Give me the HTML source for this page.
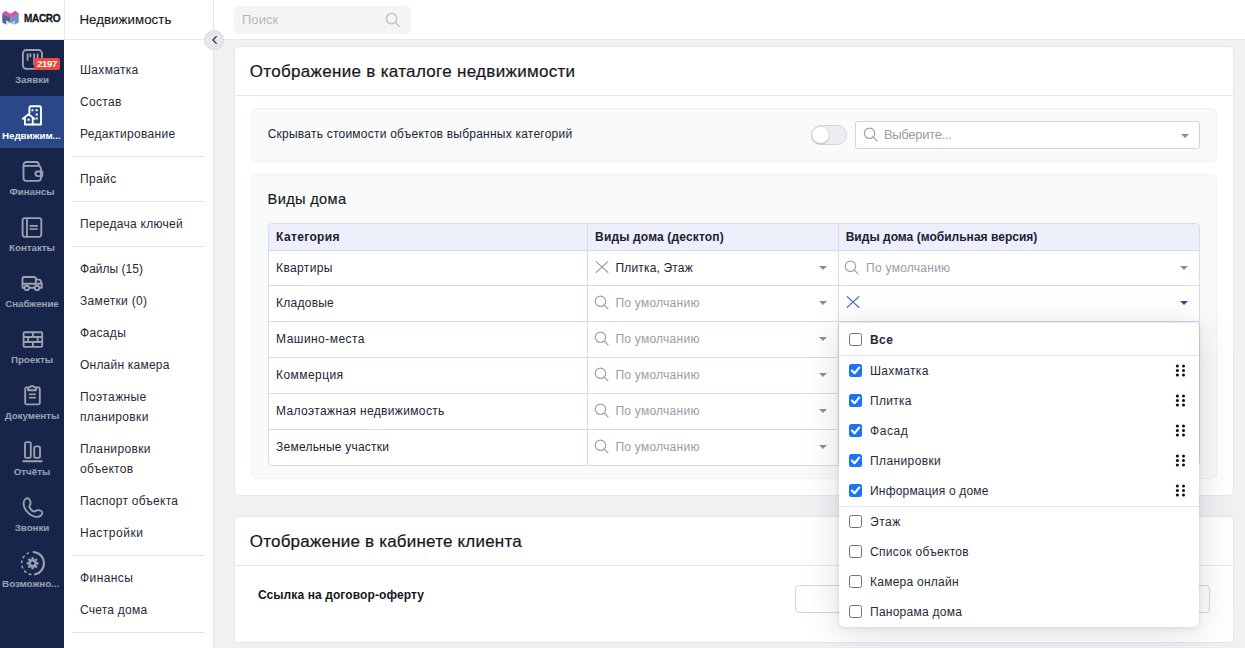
<!DOCTYPE html>
<html lang="ru">
<head>
<meta charset="utf-8">
<title>Недвижимость — настройки</title>
<style>
*{box-sizing:border-box;margin:0;padding:0}
html,body{width:1245px;height:648px;overflow:hidden;background:#f0f1f3}
body{font-family:"Liberation Sans",sans-serif;font-size:12px;color:#212534;position:relative}
.abs{position:absolute}
/* ---------- left dark sidebar ---------- */
#nav{position:absolute;left:0;top:0;width:64px;height:648px;background:#17254a}
#logo{position:absolute;left:0;top:0;width:64px;height:40px;background:#fff;border-bottom:1px solid #e6e7ea}
#logo span{position:absolute;left:24px;top:13px;font-size:10px;font-weight:700;letter-spacing:-.3px;-webkit-text-stroke:.3px #15171c;color:#15171c;line-height:12px}
.ni{position:absolute;left:0;width:64px;height:52px;color:#9ca2b2}
.ni.act{background:#2a4888;color:#fff}
.ni svg{position:absolute;left:20px;top:8px;width:24px;height:24px;fill:none;stroke:currentColor;stroke-width:1.850;stroke-linecap:round;stroke-linejoin:round}
.ni b{position:absolute;left:-8px;width:80px;top:34px;text-align:center;font-size:9.800px;line-height:12px;font-weight:700;white-space:nowrap;letter-spacing:-.05px}
.badge{position:absolute;left:34px;top:18px;width:26px;height:12px;border-radius:2px;background:#f0473c;color:#fff;font-size:9.500px;font-weight:700;line-height:12px;text-align:center;letter-spacing:-.3px;font-style:normal}
/* ---------- sub sidebar ---------- */
#sub{position:absolute;left:64px;top:0;width:150px;height:648px;background:#fff;border-right:1px solid #e3e4e8}
#subh{position:absolute;left:0;top:0;width:149px;height:40px;border-bottom:1px solid #e6e7ea;border-left:1px solid #e6e7ea}
.sep{position:absolute;left:72px;width:133px;height:1px;background:#e3e4e7}
#coll{position:absolute;left:204px;top:30px;width:20px;height:20px;border-radius:50%;background:#e6e7ea;border:1px solid #d9dade;z-index:5}
#coll svg{position:absolute;left:5.800px;top:4px;width:8px;height:10px;fill:none;stroke:#3a3d45;stroke-width:1.350;stroke-linecap:butt;stroke-linejoin:miter}
/* ---------- top bar ---------- */
#top{position:absolute;left:214px;top:0;width:1031px;height:40px;background:#fff;border-bottom:1px solid #e6e7ea}
#search{position:absolute;left:20px;top:6px;width:177px;height:28px;border-radius:5px;background:#f5f5f6}
#search svg{position:absolute;left:151px;top:5.500px;width:16px;height:16px;fill:none;stroke:#b9bcc2;stroke-width:1.300;stroke-linecap:round}
/* ---------- text ---------- */
.t{position:absolute;white-space:nowrap;line-height:16px;font-size:12px;color:#212534}
.t.b{font-weight:700;color:#1b2033}
.t.ph{color:#999da7}
.t.h2{font-size:17px;line-height:22px;color:#15171c;-webkit-text-stroke:.2px #15171c}
/* ---------- cards ---------- */
.card{position:absolute;left:234px;width:1000px;background:#fff;border:1px solid #e6e7ea;border-radius:5px}
.chd{position:absolute;left:0;width:998px;height:1px;background:#e6e7ea}
.panel{position:absolute;left:251px;width:966px;background:#f9fafa;border:1px solid #f0f1f2;border-radius:6px}
.toggle{position:absolute;left:811.300px;top:125px;width:35.300px;height:20px;border-radius:10px;background:#edeef1;border:1px solid #d3d5da}
.toggle i{position:absolute;left:-.200px;top:.700px;width:16.500px;height:16.500px;border-radius:50%;background:#fff;box-shadow:0 1px 2px rgba(0,0,0,.20),0 0 1px rgba(0,0,0,.22)}
.sel{position:absolute;background:#fff;border:1px solid #d3d5db;border-radius:3px}
.mag{position:absolute;width:14px;height:14px;overflow:visible;fill:none;stroke:#9a9fa9;stroke-width:1.150;stroke-linecap:round}
.xx{position:absolute;width:14px;height:14px;fill:none;stroke:#8d919b;stroke-width:1.050;stroke-linecap:round}
.car{position:absolute;width:0;height:0;border-left:4px solid transparent;border-right:4px solid transparent;border-top:4px solid #8a8e99}
/* ---------- table ---------- */
#tbl{position:absolute;left:268px;top:223px;width:932px;height:243px;border:1px solid #d3dcf0;border-radius:4px;background:#fff;overflow:hidden}
#tbl .th{position:absolute;left:0;top:0;width:930px;height:27px;background:#edf0fa;border-bottom:1px solid #d3dcf0}
.hl{position:absolute;left:269px;width:930px;height:1px;background:#d3dcf0}
.vl{position:absolute;top:224px;width:1px;height:241px;background:#d3dcf0}
/* ---------- dropdown ---------- */
#dd{position:absolute;left:839px;top:323px;width:359.700px;height:304px;background:#fff;border-radius:4px 4px 5px 5px;box-shadow:0 5px 36px rgba(25,30,50,.15),0 1px 6px rgba(25,30,50,.07),0 0 2px rgba(25,30,50,.12)}
.dl{position:absolute;left:839px;width:359.700px;height:1px;background:#e1e4ec}
.cb{position:absolute;left:849px;width:13px;height:13px;border-radius:2.500px;border:1px solid #6f7278;background:#fff}
.cb.on{border:none;background:#1a74f6}
.cb.on svg{position:absolute;left:0;top:0;width:13px;height:13px;fill:none;stroke:#fff;stroke-width:2.100;stroke-linecap:round;stroke-linejoin:round}
.grip{position:absolute;left:1175.100px;width:11px;height:13px;fill:#0c0d10}
</style>
</head>
<body>
<div id="nav">
  <div id="logo">
    <svg class="abs" style="left:0;top:0" width="24" height="40" viewBox="0 0 24 40">
      <polygon points="2.300,13.500 5.400,10.800 10.500,13.800 15.400,10.800 18.800,13.500 18.800,14 10.500,18.200 2.300,14" fill="#d055ae"/>
      <polygon points="2.300,13.700 10.500,17.900 10.500,23.300 6.400,20.400 6.400,24.700 2.300,22.400" fill="#50649b"/>
      <polygon points="18.800,13.700 10.500,17.900 10.500,23.300 14.900,20.400 14.400,24.700 18.800,22.400" fill="#7090d0"/>
      <polygon points="6.400,20.400 10.500,23.300 6.400,24.700" fill="#e3e4e7"/>
      <polygon points="14.900,20.400 10.500,23.300 14.400,24.700" fill="#b9bcc4"/>
    </svg>
    <span>MACRO</span>
  </div>
  <div class="ni" style="top:40px">
    <svg viewBox="0 0 24 24"><rect x="2.9" y="2" width="19.1" height="18.9" rx="3.6"/><path d="M7.600 5.400v7.300M10.400 5.400v3.900M14.100 5.400v11.600M17.600 5.400v5" stroke-width="1.800" stroke-linecap="butt"/></svg>
    <i class="badge">2197</i>
    <b>Заявки</b>
  </div>
  <div class="ni act" style="top:96px">
    <svg viewBox="0 0 24 24"><path d="M9.400 9.300V3.700a1.500 1.500 0 0 1 1.500-1.500h8.600a1.500 1.500 0 0 1 1.500 1.500v16.800h-8.300"/><path d="M2.900 14.800l5.700-4.700 5.700 4.700M4.900 13.400v7.100h7.800v-7.100"/><path d="M11.400 5.200h2v2h-2zM15.700 5.200h2v2h-2zM15.700 9.600h2v2h-2zM15.700 13.600h2v2h-2zM7.500 14.500h2.200v2.200h-2.200z" fill="currentColor" stroke="none"/></svg>
    <b style="left:-8.700px">Недвижим...</b>
  </div>
  <div class="ni" style="top:152px">
    <svg viewBox="0 0 24 24"><path d="M18.800 5.800V4.600a2.600 2.600 0 0 0-2.600-2.600H6.400a2.900 2.900 0 0 0-2.900 2.900v13a2.900 2.900 0 0 0 2.900 2.900H18a2.900 2.900 0 0 0 2.900-2.900V8.700a2.900 2.900 0 0 0-2.900-2.900H4"/><path d="M22.300 11.500h-4.600a2.300 2.300 0 0 0 0 4.600h4.600z"/></svg>
    <b>Финансы</b>
  </div>
  <div class="ni" style="top:208px">
    <svg viewBox="0 0 24 24"><rect x="2.600" y="2.100" width="18.700" height="18.700" rx="2.200"/><path d="M6.900 2.100v18.700" stroke-linecap="butt"/><path d="M9.600 9.900h8.200M9.600 13h8.200" stroke-width="1.600" stroke-linecap="butt"/></svg>
    <b>Контакты</b>
  </div>
  <div class="ni" style="top:264px">
    <svg viewBox="0 0 24 24"><path d="M2.500 15.700V6.500a1.500 1.500 0 0 1 1.500-1.500h10.300a1.500 1.500 0 0 1 1.500 1.500v9.200M2.500 11.700h19.300M15.800 7.600h3.400a1.500 1.500 0 0 1 1.300.8l1.300 3.300v4h-2.300M2.500 15.700h2M9.200 15.700h5.400"/><circle cx="6.800" cy="15.900" r="2.200" fill="#17254a"/><circle cx="17" cy="15.900" r="2.200" fill="#17254a"/></svg>
    <b>Снабжение</b>
  </div>
  <div class="ni" style="top:320px">
    <svg viewBox="0 0 24 24"><rect x="3.600" y="4.200" width="18.600" height="14.600" rx="1"/><path d="M3.600 9h18.600M3.600 14h18.600M12.900 4.200V9M8.100 9v5M17.700 9v5M12.900 14v4.800" stroke-linecap="butt"/></svg>
    <b>Проекты</b>
  </div>
  <div class="ni" style="top:376px">
    <svg viewBox="0 0 24 24"><path d="M8.100 3.400H6.700a1.500 1.500 0 0 0-1.500 1.500v14a1.500 1.500 0 0 0 1.500 1.500h11.600a1.500 1.500 0 0 0 1.500-1.500v-14a1.500 1.500 0 0 0-1.500-1.500h-1.400"/><path d="M8.100 6.200V3.400h1.900a2.200 2.200 0 0 1 4.200 0h1.900v2.800z"/><path d="M8.900 10.300h6.900M8.900 13.600h6.900" stroke-width="1.600" stroke-linecap="butt"/></svg>
    <b>Документы</b>
  </div>
  <div class="ni" style="top:432px">
    <svg viewBox="0 0 24 24"><rect x="5" y="2.100" width="5.800" height="15.700" rx="1.600"/><rect x="14.200" y="6.400" width="5.800" height="11.400" rx="1.600"/><path d="M3.300 21.200h18.400"/></svg>
    <b>Отчёты</b>
  </div>
  <div class="ni" style="top:488px">
    <svg viewBox="0 0 24 24"><path d="M7.600 2.200C9 2.200 10.500 4.800 10.600 6.800 10.700 8.400 9.300 9.400 9.400 10.700 9.600 12.400 12 15.200 13.800 15.500 15.100 15.700 16.400 14 18 14.100 20 14.200 22.300 15.300 22.300 16.600 22.300 18.600 20.500 20.800 17 20.900 11 21 3.600 14 3.600 7.500 3.600 4.500 5.400 2.200 7.600 2.200Z"/></svg>
    <b>Звонки</b>
  </div>
  <div class="ni" style="top:544px">
    <svg viewBox="0 0 28 28" style="left:19px;top:5px;width:28px;height:28px"><path d="M14.600 3a11.300 11.300 0 0 1 1.500 22.300" stroke-width="2.200"/><path d="M12.400 25.500a11.300 11.300 0 0 1 0-22.400" stroke-width="1.500" stroke-dasharray="2.900 2.500" stroke-linecap="butt"/><circle cx="13.600" cy="14.300" r="3.100" stroke-width="2.600"/><path d="M13.600 8.300v2M13.600 18.300v2M7.600 14.300h2M17.600 14.300h2M9.360 10.060l1.400 1.400M16.440 17.140l1.400 1.400M9.360 18.540l1.400-1.400M16.440 11.460l1.400-1.400" stroke-width="2.300" stroke-linecap="butt"/></svg>
    <b style="left:-9.400px">Возможно...</b>
  </div>
</div>

<div id="sub"><div id="subh"></div></div>
<div class="t" id="t0" style="left:79.4px;top:12px;letter-spacing:0.04px;font-size:13.300px;color:#15171c;-webkit-text-stroke:.12px #15171c">Недвижимость</div>
<div class="t" id="t1" style="left:80px;top:62px;letter-spacing:0.32px;color:#262a38">Шахматка</div>
<div class="t" id="t2" style="left:80px;top:94px;letter-spacing:0.31px;color:#262a38">Состав</div>
<div class="t" id="t3" style="left:80px;top:126px;letter-spacing:0.28px;color:#262a38">Редактирование</div>
<div class="t" id="t4" style="left:80px;top:171px;letter-spacing:0.38px;color:#262a38">Прайс</div>
<div class="t" id="t5" style="left:80px;top:216px;letter-spacing:0.27px;color:#262a38">Передача ключей</div>
<div class="t" id="t6" style="left:80px;top:261px;letter-spacing:0.01px;color:#262a38">Файлы (15)</div>
<div class="t" id="t7" style="left:80px;top:293px;letter-spacing:0.32px;color:#262a38">Заметки (0)</div>
<div class="t" id="t8" style="left:80px;top:325px;letter-spacing:0.34px;color:#262a38">Фасады</div>
<div class="t" id="t9" style="left:80px;top:357px;letter-spacing:0.22px;color:#262a38">Онлайн камера</div>
<div class="t" id="t10" style="left:80px;top:389px;letter-spacing:0.39px;color:#262a38">Поэтажные</div>
<div class="t" id="t11" style="left:80px;top:409px;letter-spacing:0.35px;color:#262a38">планировки</div>
<div class="t" id="t12" style="left:80px;top:441px;letter-spacing:0.36px;color:#262a38">Планировки</div>
<div class="t" id="t13" style="left:80px;top:461px;letter-spacing:0.28px;color:#262a38">объектов</div>
<div class="t" id="t14" style="left:80px;top:493px;letter-spacing:0.25px;color:#262a38">Паспорт объекта</div>
<div class="t" id="t15" style="left:80px;top:525px;letter-spacing:0.50px;color:#262a38">Настройки</div>
<div class="t" id="t16" style="left:80px;top:570px;letter-spacing:0.42px;color:#262a38">Финансы</div>
<div class="t" id="t17" style="left:80px;top:602px;letter-spacing:0.23px;color:#262a38">Счета дома</div>
<div class="sep" style="top:156px"></div>
<div class="sep" style="top:201px"></div>
<div class="sep" style="top:246px"></div>
<div class="sep" style="top:555px"></div>
<div class="sep" style="top:632px"></div>
<div id="coll"><svg viewBox="0 0 8 10"><path d="M5.600 1.200L1.900 5l3.700 3.800"/></svg></div>
<div id="top"><div id="search"><svg viewBox="0 0 16 16"><circle cx="6.600" cy="6.600" r="5.200"/><path d="M10.400 10.400L14.300 14.400"/></svg></div></div>
<div class="t" id="t18" style="left:242px;top:12px;letter-spacing:0.03px;font-size:13px;color:#b4b7bd">Поиск</div>
<div class="card" style="top:46px;height:450px"><div class="chd" style="top:48px"></div></div>
<div class="t h2" id="t19" style="left:249.8px;top:61px;letter-spacing:0.31px">Отображение в каталоге недвижимости</div>
<div class="panel" style="top:108px;height:54px"></div>
<div class="t" id="t20" style="left:267.7px;top:126px;letter-spacing:0.23px">Скрывать стоимости объектов выбранных категорий</div>
<div class="toggle"><i></i></div>
<div class="sel" style="left:855px;top:121px;width:345px;height:28px"></div>
<svg class="mag" style="left:864.3px;top:127.6px" viewBox="0 0 14 14"><circle cx="5.500" cy="5.300" r="5.200"/><path d="M9.200 9L13 12.900"/></svg>
<div class="t ph" id="t21" style="left:883.9px;top:127px;letter-spacing:-0.30px;font-size:13px">Выберите...</div>
<div class="car" style="left:1181px;top:134px"></div>
<div class="panel" style="top:174px;height:305px"></div>
<div class="t" id="t22" style="left:267.6px;top:189px;letter-spacing:0.34px;font-size:14.600px;line-height:20px;color:#15171c;-webkit-text-stroke:.15px #15171c">Виды дома</div>
<div id="tbl"><div class="th"></div></div>
<div class="vl" style="left:587px"></div><div class="vl" style="left:838px"></div>
<div class="hl" style="top:285px"></div>
<div class="hl" style="top:321px"></div>
<div class="hl" style="top:357px"></div>
<div class="hl" style="top:393px"></div>
<div class="hl" style="top:429px"></div>
<div class="t b" id="t23" style="left:276.1px;top:229px;letter-spacing:0.35px">Категория</div>
<div class="t b" id="t24" style="left:595.1px;top:229px;letter-spacing:0.15px">Виды дома (десктоп)</div>
<div class="t b" id="t25" style="left:845.7px;top:229px;letter-spacing:0.02px">Виды дома (мобильная версия)</div>
<div class="t" id="t26" style="left:276.1px;top:260px;letter-spacing:0.35px">Квартиры</div>
<svg class="xx" style="left:595.1px;top:261px" viewBox="0 0 14 14"><path d="M1.200 .700L12.900 11.400M12.900 .700L1.200 11.400"/></svg>
<div class="t" id="t27" style="left:615.4px;top:260px;letter-spacing:0.18px">Плитка, Этаж</div>
<div class="car" style="left:819px;top:266px"></div>
<svg class="mag" style="left:845.4px;top:261px" viewBox="0 0 14 14"><circle cx="5.500" cy="5.300" r="5.200"/><path d="M9.200 9L13 12.900"/></svg>
<div class="t ph" id="t28" style="left:866.1px;top:260px;letter-spacing:0.26px">По умолчанию</div>
<div class="car" style="left:1179.8px;top:266px"></div>
<div class="t" id="t29" style="left:276.1px;top:295px;letter-spacing:0.24px">Кладовые</div>
<svg class="mag" style="left:595.1px;top:296px" viewBox="0 0 14 14"><circle cx="5.500" cy="5.300" r="5.200"/><path d="M9.200 9L13 12.900"/></svg>
<div class="t ph" id="t30" style="left:615.4px;top:295px;letter-spacing:0.26px">По умолчанию</div>
<div class="car" style="left:819px;top:300.5px"></div>
<svg class="xx" style="left:845.8px;top:296px;stroke:#3b57b8" viewBox="0 0 14 14"><path d="M1.200 .700L12.900 11.400M12.900 .700L1.200 11.400"/></svg>
<div class="car" style="left:1179.8px;top:300.5px;border-top-color:#2d4fb0"></div>
<div class="t" id="t31" style="left:276.1px;top:331px;letter-spacing:0.45px">Машино-места</div>
<svg class="mag" style="left:595.1px;top:332px" viewBox="0 0 14 14"><circle cx="5.500" cy="5.300" r="5.200"/><path d="M9.200 9L13 12.900"/></svg>
<div class="t ph" id="t32" style="left:615.4px;top:331px;letter-spacing:0.26px">По умолчанию</div>
<div class="car" style="left:819px;top:336.5px"></div>
<div class="t" id="t33" style="left:276.1px;top:367px;letter-spacing:0.43px">Коммерция</div>
<svg class="mag" style="left:595.1px;top:368px" viewBox="0 0 14 14"><circle cx="5.500" cy="5.300" r="5.200"/><path d="M9.200 9L13 12.900"/></svg>
<div class="t ph" id="t34" style="left:615.4px;top:367px;letter-spacing:0.26px">По умолчанию</div>
<div class="car" style="left:819px;top:373px"></div>
<div class="t" id="t35" style="left:276.1px;top:403px;letter-spacing:0.35px">Малоэтажная недвижимость</div>
<svg class="mag" style="left:595.1px;top:404px" viewBox="0 0 14 14"><circle cx="5.500" cy="5.300" r="5.200"/><path d="M9.200 9L13 12.900"/></svg>
<div class="t ph" id="t36" style="left:615.4px;top:403px;letter-spacing:0.26px">По умолчанию</div>
<div class="car" style="left:819px;top:408.7px"></div>
<div class="t" id="t37" style="left:276.1px;top:439px;letter-spacing:0.22px">Земельные участки</div>
<svg class="mag" style="left:595.1px;top:440px" viewBox="0 0 14 14"><circle cx="5.500" cy="5.300" r="5.200"/><path d="M9.200 9L13 12.900"/></svg>
<div class="t ph" id="t38" style="left:615.4px;top:439px;letter-spacing:0.26px">По умолчанию</div>
<div class="car" style="left:819px;top:444.5px"></div>
<div class="card" style="top:516px;height:127px"><div class="chd" style="top:48px"></div></div>
<div class="t h2" id="t39" style="left:249.8px;top:531px;letter-spacing:0.20px">Отображение в кабинете клиента</div>
<div class="t b" id="t40" style="left:257.9px;top:587px;letter-spacing:0.10px;color:#15171c">Ссылка на договор-оферту</div>
<div class="sel" style="left:795px;top:585px;width:415px;height:28px;border-radius:4px"></div>
<div id="dd"></div>
<div class="cb" style="top:333px"></div>
<div class="t b" id="t41" style="left:870px;top:332px;letter-spacing:0.43px;color:#262a38">Все</div>
<div class="cb on" style="top:364px"><svg viewBox="0 0 13 13"><path d="M2.900 6.600L5.500 9.300L10.200 3.500"/></svg></div>
<div class="t" id="t42" style="left:870px;top:363px;letter-spacing:0.34px;color:#262a38">Шахматка</div>
<svg class="grip" style="top:364px" viewBox="0 0 11 13"><circle cx="2.400" cy="1.900" r="1.500"/><circle cx="8.500" cy="1.900" r="1.500"/><circle cx="2.400" cy="6.400" r="1.500"/><circle cx="8.500" cy="6.400" r="1.500"/><circle cx="2.400" cy="10.900" r="1.500"/><circle cx="8.500" cy="10.900" r="1.500"/></svg>
<div class="cb on" style="top:394px"><svg viewBox="0 0 13 13"><path d="M2.900 6.600L5.500 9.300L10.200 3.500"/></svg></div>
<div class="t" id="t43" style="left:870px;top:393px;letter-spacing:0.27px;color:#262a38">Плитка</div>
<svg class="grip" style="top:394px" viewBox="0 0 11 13"><circle cx="2.400" cy="1.900" r="1.500"/><circle cx="8.500" cy="1.900" r="1.500"/><circle cx="2.400" cy="6.400" r="1.500"/><circle cx="8.500" cy="6.400" r="1.500"/><circle cx="2.400" cy="10.900" r="1.500"/><circle cx="8.500" cy="10.900" r="1.500"/></svg>
<div class="cb on" style="top:424px"><svg viewBox="0 0 13 13"><path d="M2.900 6.600L5.500 9.300L10.200 3.500"/></svg></div>
<div class="t" id="t44" style="left:870px;top:423px;letter-spacing:0.56px;color:#262a38">Фасад</div>
<svg class="grip" style="top:424px" viewBox="0 0 11 13"><circle cx="2.400" cy="1.900" r="1.500"/><circle cx="8.500" cy="1.900" r="1.500"/><circle cx="2.400" cy="6.400" r="1.500"/><circle cx="8.500" cy="6.400" r="1.500"/><circle cx="2.400" cy="10.900" r="1.500"/><circle cx="8.500" cy="10.900" r="1.500"/></svg>
<div class="cb on" style="top:454px"><svg viewBox="0 0 13 13"><path d="M2.900 6.600L5.500 9.300L10.200 3.500"/></svg></div>
<div class="t" id="t45" style="left:870px;top:453px;letter-spacing:0.39px;color:#262a38">Планировки</div>
<svg class="grip" style="top:454px" viewBox="0 0 11 13"><circle cx="2.400" cy="1.900" r="1.500"/><circle cx="8.500" cy="1.900" r="1.500"/><circle cx="2.400" cy="6.400" r="1.500"/><circle cx="8.500" cy="6.400" r="1.500"/><circle cx="2.400" cy="10.900" r="1.500"/><circle cx="8.500" cy="10.900" r="1.500"/></svg>
<div class="cb on" style="top:484px"><svg viewBox="0 0 13 13"><path d="M2.900 6.600L5.500 9.300L10.200 3.500"/></svg></div>
<div class="t" id="t46" style="left:870px;top:483px;letter-spacing:0.19px;color:#262a38">Информация о доме</div>
<svg class="grip" style="top:484px" viewBox="0 0 11 13"><circle cx="2.400" cy="1.900" r="1.500"/><circle cx="8.500" cy="1.900" r="1.500"/><circle cx="2.400" cy="6.400" r="1.500"/><circle cx="8.500" cy="6.400" r="1.500"/><circle cx="2.400" cy="10.900" r="1.500"/><circle cx="8.500" cy="10.900" r="1.500"/></svg>
<div class="cb" style="top:515px"></div>
<div class="t" id="t47" style="left:870px;top:514px;letter-spacing:0.55px;color:#262a38">Этаж</div>
<div class="cb" style="top:545px"></div>
<div class="t" id="t48" style="left:870px;top:544px;letter-spacing:0.31px;color:#262a38">Список объектов</div>
<div class="cb" style="top:575px"></div>
<div class="t" id="t49" style="left:870px;top:574px;letter-spacing:0.25px;color:#262a38">Камера онлайн</div>
<div class="cb" style="top:605px"></div>
<div class="t" id="t50" style="left:870px;top:604px;letter-spacing:0.25px;color:#262a38">Панорама дома</div>
<div class="dl" style="top:355px"></div><div class="dl" style="top:506px"></div>
</body>
</html>
